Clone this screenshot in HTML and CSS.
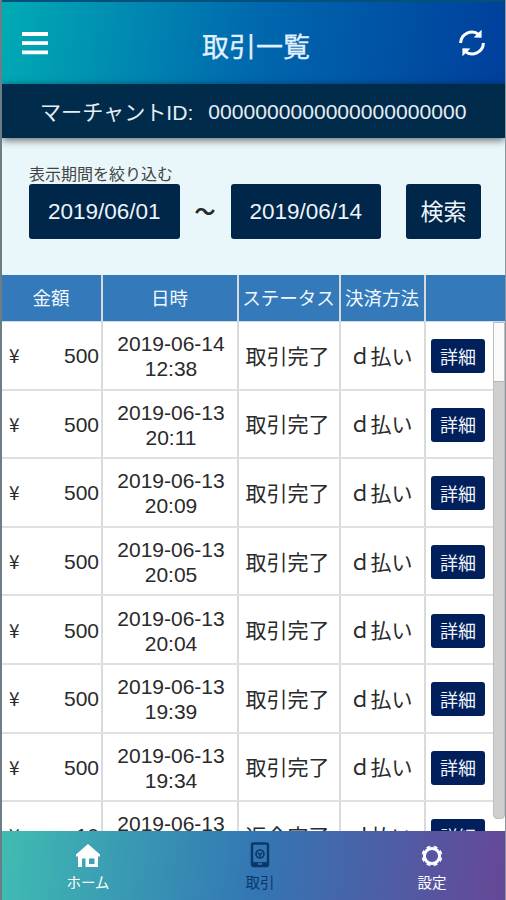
FILE: index.html
```html
<!DOCTYPE html>
<html lang="ja">
<head>
    <meta charset="UTF-8">
    <meta name="viewport" content="width=device-width, initial-scale=1.0">
    <title>取引一覧</title>
    <link rel="stylesheet" href="styles.css">
</head>
<body>
    <div class="app">
        <!-- ヘッダー -->
        <header class="header">
            <button class="icon-button menu-button" aria-label="メニュー">
                <svg width="26" height="23" viewBox="0 0 26 23"><path d="M0 2h26M0 11.2h26M0 20.3h26" stroke="#fff" stroke-width="3.8"/></svg>
            </button>
            <h1>取引一覧</h1>
            <button class="icon-button reload-button" aria-label="更新">
                <svg width="26" height="28" viewBox="0 0 26 28" fill="none" stroke="#fff" stroke-width="3">
                    <path d="M1.6 14A11.3 11.3 0 0 1 20 5.6"/>
                    <path d="M24.4 14A11.3 11.3 0 0 1 6 22.4"/>
                    <path d="M22.6 0.8v8l-8-.4zM3.4 27.2v-8l8 .4z" fill="#fff" stroke="none"/>
                </svg>
            </button>
        </header>
        <div class="merchant">マーチャントID:<span class="merchant-id">0000000000000000000000</span></div>

        <!-- 期間の絞り込み -->
        <section class="filter">
            <div class="filter-label">表示期間を絞り込む</div>
            <div class="filter-row">
                <button class="date-button">2019/06/01</button>
                <span class="tilde">～</span>
                <button class="date-button">2019/06/14</button>
                <button class="search-button">検索</button>
            </div>
        </section>

        <!-- 取引テーブル -->
        <div class="row table-head">
            <div>金額</div><div>日時</div><div>ステータス</div><div>決済方法</div><div></div>
        </div>
        <main class="list">
            <div class="rows">
                <div class="row"><div class="amount"><span>¥</span><span>500</span></div><div class="date">2019-06-14<br>12:38</div><div>取引完了</div><div>ｄ払い</div><div><button class="detail">詳細</button></div></div>
                <div class="row"><div class="amount"><span>¥</span><span>500</span></div><div class="date">2019-06-13<br>20:11</div><div>取引完了</div><div>ｄ払い</div><div><button class="detail">詳細</button></div></div>
                <div class="row"><div class="amount"><span>¥</span><span>500</span></div><div class="date">2019-06-13<br>20:09</div><div>取引完了</div><div>ｄ払い</div><div><button class="detail">詳細</button></div></div>
                <div class="row"><div class="amount"><span>¥</span><span>500</span></div><div class="date">2019-06-13<br>20:05</div><div>取引完了</div><div>ｄ払い</div><div><button class="detail">詳細</button></div></div>
                <div class="row"><div class="amount"><span>¥</span><span>500</span></div><div class="date">2019-06-13<br>20:04</div><div>取引完了</div><div>ｄ払い</div><div><button class="detail">詳細</button></div></div>
                <div class="row"><div class="amount"><span>¥</span><span>500</span></div><div class="date">2019-06-13<br>19:39</div><div>取引完了</div><div>ｄ払い</div><div><button class="detail">詳細</button></div></div>
                <div class="row"><div class="amount"><span>¥</span><span>500</span></div><div class="date">2019-06-13<br>19:34</div><div>取引完了</div><div>ｄ払い</div><div><button class="detail">詳細</button></div></div>
                <div class="row"><div class="amount"><span>¥</span><span>10</span></div><div class="date">2019-06-13<br>19:30</div><div>返金完了</div><div>ｄ払い</div><div><button class="detail">詳細</button></div></div>
            </div>
            <div class="scrollbar"><div class="thumb"></div></div>
        </main>

        <!-- フッターナビ -->
        <nav class="tabs">
            <a class="tab">
                <svg width="24" height="26" viewBox="0 0 24 26"><path fill="#fff" fill-rule="evenodd" d="M12 2L0 12.5v2h2V25h4v-8.500h3.500V25H22V14.500h2v-2zM13 16.500h5.500v5.500H13z"/></svg>
                <span>ホーム</span>
            </a>
            <a class="tab active">
                <svg width="20" height="26" viewBox="0 0 20 26" fill="none" stroke="#0b3868">
                    <rect x="2" y="1.5" width="16" height="22.5" rx="1.5" stroke-width="2.4"/>
                    <path d="M2 22.5h6M12 22.5h6" stroke-width="3.6"/>
                    <path d="M2 20.7h16" stroke-width="1"/>
                    <circle cx="10" cy="12" r="4" stroke-width="1.7"/>
                    <path d="M7.8 10.5L10 13l2.200-2.500M10 13v2" stroke-width="1.5"/>
                </svg>
                <span>取引</span>
            </a>
            <a class="tab">
                <svg width="22" height="26" viewBox="-11 -14 22 26">
                    <circle r="7.6" fill="none" stroke="#fff" stroke-width="3"/>
                    <circle r="9.5" fill="none" stroke="#fff" stroke-width="1.8" pathLength="80" stroke-dasharray="5.4 4.6" stroke-dashoffset="-2.3"/>
                </svg>
                <span>設定</span>
            </a>
        </nav>
    </div>
</body>
</html>
```

FILE: styles.css
```css
* {
    box-sizing: border-box;
}

body {
    margin: 0;
    font-family: 'Liberation Sans', 'Noto Sans CJK JP', sans-serif;
    color: #2a2a2a;
}

button {
    padding: 0;
    border: none;
    font-family: inherit;
    color: #eef4fa;
    background: #00274a;
    border-radius: 3px;
}

.app {
    width: 506px;
    height: 900px;
    display: flex;
    flex-direction: column;
    overflow: hidden;
    border-left: 2px solid #6d7d85;
    border-right: 1px solid #8a979e;
    background: #fff;
}

.header {
    height: 84px;
    flex: none;
    display: flex;
    align-items: center;
    justify-content: space-between;
    padding: 0 20px;
    border-top: 2px solid #02507c;
    background: linear-gradient(97deg, #00abb4 0%, #0068ae 50%, #003f9c 100%);
}

.header h1 {
    margin: 9px 0 0 5px;
    font-size: 27px;
    font-weight: 400;
    line-height: 40px;
    color: #e2f1ff;
    -webkit-text-stroke: 0.3px #e2f1ff;
}

.icon-button {
    background: none;
    display: flex;
}

.merchant {
    height: 54px;
    flex: none;
    display: flex;
    align-items: center;
    padding: 0 0 0 38px;
    font-size: 21.1px;
    white-space: nowrap;
    color: #e6edf3;
    background: #002b4a;
    box-shadow: 0 2px 8px rgba(0, 0, 0, 0.6);
    z-index: 1;
}

.merchant-id {
    margin: 1px 0 0 15px;
}

.filter {
    height: 137px;
    flex: none;
    padding: 25px 24px 0 27px;
    background: #e9f7fb;
}

.filter-label {
    height: 21px;
    font-size: 16px;
    line-height: 23px;
    color: #444;
}

.filter-row {
    display: flex;
    align-items: center;
}

.date-button {
    width: 151px;
    height: 55px;
    font-size: 22.5px;
}

.tilde {
    width: 51px;
    text-align: center;
    font-size: 21px;
    font-weight: 700;
    line-height: 26px;
}

.search-button {
    width: 75px;
    height: 55px;
    margin-left: 25px;
    padding-bottom: 3px;
    font-size: 23px;
}

.row {
    display: grid;
    grid-template-columns: 101px 136px 102px 85px 1fr;
    height: 68.6px;
    font-size: 21px;
    border-bottom: 2px solid #e0e0e0;
}

.row > div {
    display: flex;
    align-items: center;
    justify-content: center;
    padding: 0 3px 1px 0;
    border-right: 2px solid #dadada;
    white-space: nowrap;
}

.row > div:last-child {
    border-right: none;
    padding: 2px 3px 0 0;
}

.row .amount {
    justify-content: space-between;
    padding: 2px 2px 0 7px;
}

.row .amount span:first-child {
    padding-bottom: 3px;
    font-family: 'Noto Sans CJK JP', sans-serif;
    font-size: 19px;
}

.row .date {
    padding: 2px 0 0 2px;
    line-height: 25px;
    text-align: center;
}

.table-head {
    height: 47px;
    flex: none;
    border-bottom: 1px solid #c9dced;
    font-size: 18.5px;
    color: #f0f7ff;
    background: #347aba;
}

.table-head > div {
    padding: 0 1px 2px 0;
}

.detail {
    width: 54px;
    height: 34px;
    padding-bottom: 1px;
    font-size: 18px;
    background: #001f5b;
}

.list {
    height: 509px;
    flex: none;
    display: flex;
    overflow: hidden;
}

.rows {
    flex: 1;
}

.scrollbar {
    width: 12px;
    height: 497px;
    border-radius: 0 0 4px 4px;
    background: #cfcfcf;
    border: 1px solid #bdbdbd;
}

.thumb {
    height: 59px;
    background: #fafafa;
    border-bottom: 1px solid #b5b5b5;
}

.tabs {
    flex: 1;
    display: grid;
    grid-template-columns: repeat(3, 172px);
    background: linear-gradient(97deg, #40bcb2 0%, #3377b4 50%, #664797 100%);
}

.tab {
    display: flex;
    flex-direction: column;
    align-items: center;
    padding-top: 11px;
    font-size: 14.5px;
    color: #fff;
}

.tab span {
    margin-top: 4px;
    line-height: 22px;
}

.tab.active {
    color: #0b3868;
}
```
